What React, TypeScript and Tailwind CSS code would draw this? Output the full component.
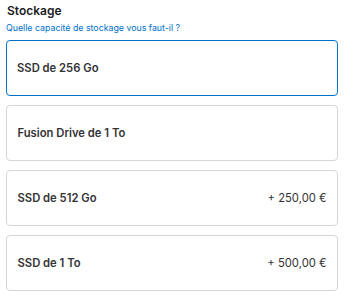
import React from "react";

const options = [
  { label: "SSD de 256 Go", price: "", selected: true },
  { label: "Fusion Drive de 1 To", price: "", selected: false },
  { label: "SSD de 512 Go", price: "+ 250,00 €", selected: false },
  { label: "SSD de 1 To", price: "+ 500,00 €", selected: false },
];

export default function App() {
  return (
    <div
      className="w-[348px] h-[300px] bg-white pl-[6px] pr-[10px] pt-[3px]"
      style={{ fontFamily: "Inter, 'Liberation Sans', sans-serif" }}
    >
      <div className="pl-px text-[12px] leading-[16px] font-semibold text-[#1d1d1f]">Stockage</div>
      <div className="mt-[3px] text-[8.8px] leading-[12px] text-[#0070c9]">
        Quelle capacité de stockage vous faut-il ?
      </div>
      <div className="mt-[6px] flex flex-col gap-[9px]">
        {options.map((o) => (
          <div
            key={o.label}
            className={
              o.selected
                ? "h-[56px] rounded-[4px] border-[1.5px] border-[#0070c9] flex items-center justify-between pl-[10px] pr-[10px]"
                : "h-[56px] rounded-[4px] border border-[#d6d6d6] flex items-center justify-between pl-[10.5px] pr-[10.5px]"
            }
          >
            <span className="text-[11.25px] font-semibold text-[#333336]">{o.label}</span>
            <span className="text-[11.25px] text-[#333336]">{o.price}</span>
          </div>
        ))}
      </div>
    </div>
  );
}
